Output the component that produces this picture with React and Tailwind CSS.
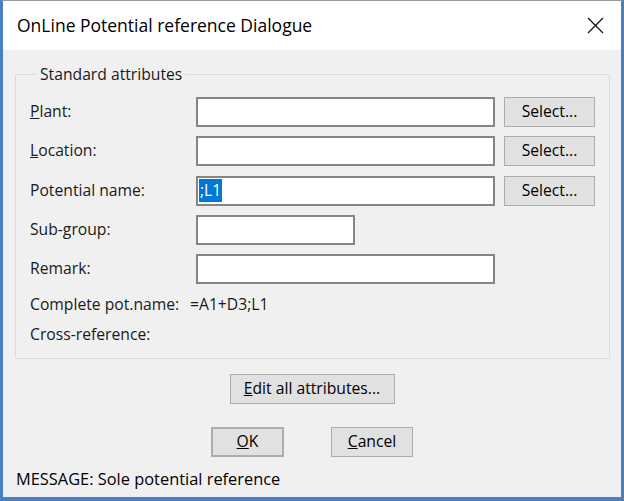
import React from 'react';

const font = { fontFamily: '"Open Sans", "Noto Sans", "Liberation Sans", sans-serif' };

const Field = ({ width = 'w-[299px]', children }) => (
  <div className={`${width} h-[30px] bg-white border-2 border-[#858585] flex items-center px-[1px]`}>
    {children}
  </div>
);

const Button = ({ className = '', children }) => (
  <button
    type="button"
    className={`h-[30px] bg-[#e1e1e1] border border-[#adadad] text-[15.7px] text-black flex items-center justify-center ${className}`}
  >
    {children}
  </button>
);

const Row = ({ label, children, select }) => (
  <div className="flex items-center h-[30px]">
    <div className="w-[166px] text-[15.7px] text-[#1a1a1a]">{label}</div>
    {children}
    {select && <Button className="w-[91px] ml-[9px]">Select...</Button>}
  </div>
);

const App = () => {
  return (
    <div
      className="w-[624px] h-[501px] flex flex-col border-l-[3px] border-r-[3px] border-b-[4px] border-[#4a7fc3] border-t border-t-[#9a9a9a]"
      style={font}
    >
      {/* Title bar */}
      <div className="h-[49px] bg-white flex items-center justify-between pl-[14px] pr-[17px]">
        <span className="text-[17.5px] text-black">OnLine Potential reference Dialogue</span>
        <svg width="17" height="17" viewBox="0 0 17 17">
          <path d="M1 1 L16 16 M16 1 L1 16" stroke="#111" strokeWidth="1.3" />
        </svg>
      </div>

      {/* Body */}
      <div className="flex-1 bg-[#f0f0f0] flex flex-col px-[12px]">
        <fieldset className="mt-[14px] border border-[#dcdcdc] rounded-[2px] pl-[14px] pr-[14px] pb-[13px]">
          <legend className="ml-[7px] px-[3px] text-[15.7px] text-[#1a1a1a] leading-[20px]">
            Standard attributes
          </legend>
          <div className="flex flex-col gap-[9.25px] pt-[13px]">
            <Row label={<><u>P</u>lant:</>} select>
              <Field />
            </Row>
            <Row label={<><u>L</u>ocation:</>} select>
              <Field />
            </Row>
            <Row label="Potential name:" select>
              <Field>
                <span className="bg-[#0078d7] text-white text-[15.7px] leading-[23px] px-[1px]">;L1</span>
              </Field>
            </Row>
            <Row label="Sub-group:">
              <Field width="w-[159px]" />
            </Row>
            <Row label="Remark:">
              <Field />
            </Row>
          </div>
          <div className="flex items-center h-[20px] mt-[11px] text-[15.7px] text-[#1a1a1a]">
            <span className="w-[160px]">Complete pot.name:</span>
            <span>=A1+D3;L1</span>
          </div>
          <div className="flex items-center h-[20px] mt-[10px] text-[15.7px] text-[#1a1a1a]">
            Cross-reference:
          </div>
        </fieldset>

        <div className="flex justify-center mt-[15px]">
          <Button className="w-[165px]">
            <span><u>E</u>dit all attributes...</span>
          </Button>
        </div>

        <div className="flex justify-center gap-[47px] mt-[23px]">
          <Button className="w-[73px] border-2 border-[#0078d7]">
            <span><u>O</u>K</span>
          </Button>
          <Button className="w-[82px]">
            <span><u>C</u>ancel</span>
          </Button>
        </div>

        <div className="mt-[12px] text-[16.4px] text-black leading-[20px] pl-[1px]">
          MESSAGE: Sole potential reference
        </div>
      </div>
    </div>
  );
};

export default App;
